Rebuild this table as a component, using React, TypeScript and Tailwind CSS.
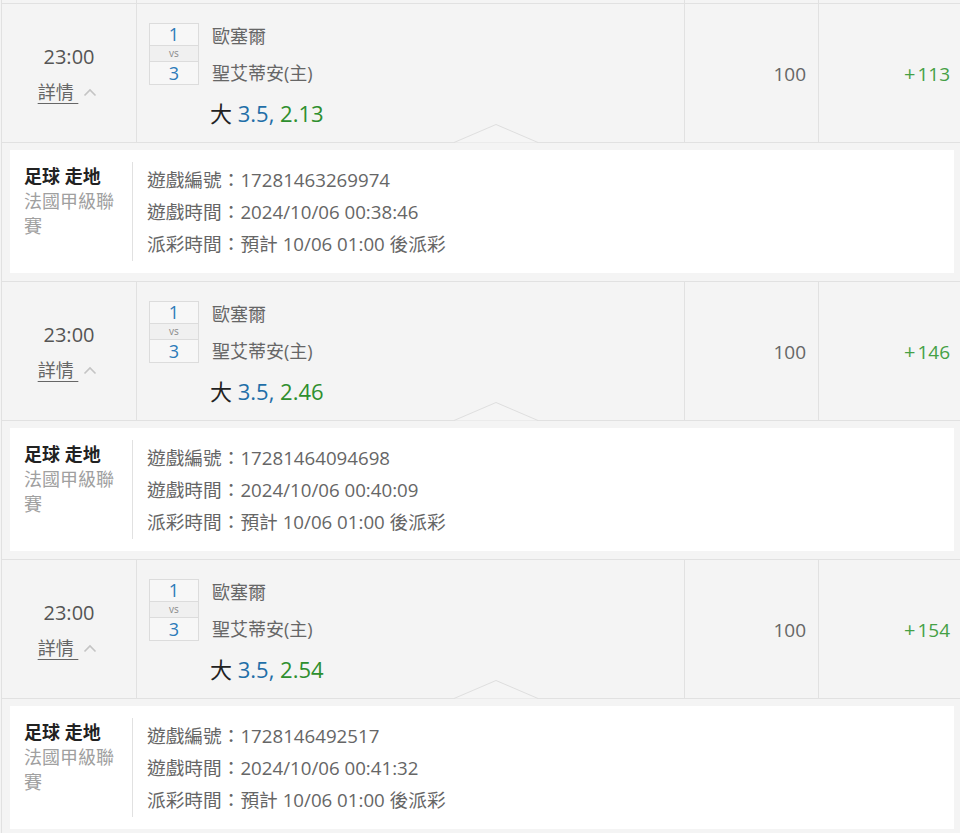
import React from "react";

type Bet = {
  home: string;
  away: string;
  line: string;
  odds: string;
  stake: string;
  win: string;
  id: string;
  time: string;
};

const bets: Bet[] = [
  { home: "歐塞爾", away: "聖艾蒂安(主)", line: "3.5", odds: "2.13", stake: "100", win: "113", id: "17281463269974", time: "2024/10/06 00:38:46" },
  { home: "歐塞爾", away: "聖艾蒂安(主)", line: "3.5", odds: "2.46", stake: "100", win: "146", id: "17281464094698", time: "2024/10/06 00:40:09" },
  { home: "歐塞爾", away: "聖艾蒂安(主)", line: "3.5", odds: "2.54", stake: "100", win: "154", id: "1728146492517", time: "2024/10/06 00:41:32" },
];

const grid = "grid grid-cols-[135px_548px_134px_1fr]";

function MainRow({ b }: { b: Bet }) {
  return (
    <div className={`relative ${grid} h-[139px] border-t border-[#e1e1e1] bg-[#f4f4f4]`}>
      <div className="flex flex-col items-center justify-center border-r border-[#e1e1e1] pt-[3px]">
        <div className="text-[20px] leading-[24px] text-[#555]">23:00</div>
        <div className="mt-[11px] flex items-center text-[18px] leading-[24px] text-[#666]">
          <span className="-ml-[3px] underline decoration-1 underline-offset-[4px]">詳情&nbsp;</span>
          <svg width="14" height="10" viewBox="0 0 14 10" className="ml-[5px]">
            <polyline points="1.5,8.5 7,3 12.5,8.5" fill="none" stroke="#c4c4c4" strokeWidth="1.6" />
          </svg>
        </div>
      </div>
      <div className="border-r border-[#e1e1e1] pl-[12px] pt-[19px]">
        <div className="flex">
          <div className="flex w-[50px] flex-col border border-[#dcdcdc] bg-[#f7f7f7] text-center">
            <div className="h-[21px] text-[18px] leading-[21px] text-[#2b7bb9]">1</div>
            <div className="h-[17px] border-y border-[#dcdcdc] bg-[#f0f0f0] text-[10px] leading-[15px] text-[#888]">vs</div>
            <div className="h-[22px] text-[18px] leading-[22px] text-[#2b7bb9]">3</div>
          </div>
          <div className="ml-[13px] flex flex-col gap-[13px] pt-px text-[18px] leading-[24px] text-[#666]">
            <div>{b.home}</div>
            <div>{b.away}</div>
          </div>
        </div>
        <div className="ml-[61px] mt-[14px] text-[22px] leading-[28px]">
          <span className="text-[#222]">大 </span>
          <span className="text-[#1f6fa8]">{b.line}, </span>
          <span className="text-[#2e8f2e]">{b.odds}</span>
        </div>
      </div>
      <div className="flex items-center justify-end border-r border-[#e1e1e1] pr-[12px] pt-[2px] text-[19px] text-[#666]">
        {b.stake}
      </div>
      <div className="flex items-center justify-end pr-[10px] pt-[2px] text-[19px] text-[#45a045]">
        <span className="mr-[2px] text-[20px]">+</span>
        {b.win}
      </div>
      <svg width="84" height="20" viewBox="0 0 84 20" className="absolute bottom-[-1px] left-[452px] z-10">
        <polygon points="0,19.5 42,1.5 84,19.5" fill="#f5f5f5" />
        <polyline points="0,19.5 42,1.5 84,19.5" fill="none" stroke="#dedede" strokeWidth="1" />
      </svg>
    </div>
  );
}

function DetailRow({ b }: { b: Bet }) {
  return (
    <div className="h-[139px] border-t border-[#e1e1e1] bg-[#f4f4f4] pb-[8px] pl-[8px] pr-[6px] pt-[7px]">
      <div className="flex h-[123px] bg-white py-[12px]">
        <div className="w-[123px] border-r border-[#e1e1e1] pl-[14px] pr-[9px] pt-[2px] text-[18px] leading-[25px]">
          <div className="font-bold text-[#222]">足球 走地</div>
          <div className="text-[#a0a0a0]">法國甲級聯賽</div>
        </div>
        <div className="pl-[14px] pt-[2px] text-[18.7px] leading-[32px] text-[#666]">
          <div>遊戲編號：{b.id}</div>
          <div>遊戲時間：{b.time}</div>
          <div>派彩時間：預計 10/06 01:00 後派彩</div>
        </div>
      </div>
    </div>
  );
}

export default function App() {
  return (
    <div className="h-[833px] w-[960px] overflow-hidden bg-[#f4f4f4] font-['Open_Sans','Noto_Sans_CJK_TC',sans-serif]">
      <div className="ml-px border-l border-[#e1e1e1]">
        <div className={`${grid} h-[3px]`}>
          <div className="border-r border-[#e1e1e1]" />
          <div className="border-r border-[#e1e1e1]" />
          <div className="border-r border-[#e1e1e1]" />
          <div />
        </div>
        {bets.map((b) => (
          <React.Fragment key={b.id}>
            <MainRow b={b} />
            <DetailRow b={b} />
          </React.Fragment>
        ))}
      </div>
    </div>
  );
}
